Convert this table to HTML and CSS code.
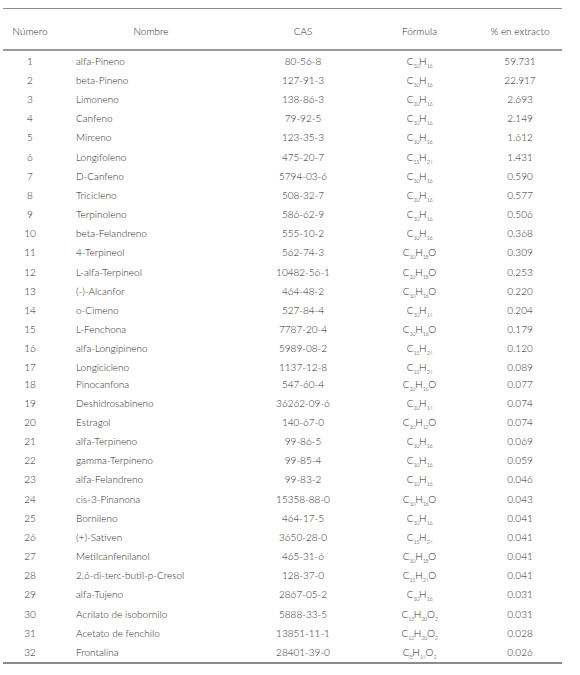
FILE: index.html
```html
<!DOCTYPE html>
<html lang="es">
<head>
<meta charset="utf-8">
<title>Composición</title>
<link rel="stylesheet" href="styles.css">
</head>
<body>
<table class="tbl">
<colgroup><col class="c1"><col class="c2"><col class="c3"><col class="c4"><col class="c5"></colgroup>
<thead>
<tr><th>Número</th><th>Nombre</th><th>CAS</th><th>Fórmula</th><th>% en extracto</th></tr>
</thead>
<tbody>
<tr><td>1</td><td class="name">alfa-Pineno</td><td>80-56-8</td><td>C<sub>10</sub>H<sub>16</sub></td><td>59.731</td></tr>
<tr><td>2</td><td class="name">beta-Pineno</td><td>127-91-3</td><td>C<sub>10</sub>H<sub>16</sub></td><td>22.917</td></tr>
<tr><td>3</td><td class="name">Limoneno</td><td>138-86-3</td><td>C<sub>10</sub>H<sub>16</sub></td><td>2.693</td></tr>
<tr><td>4</td><td class="name">Canfeno</td><td>79-92-5</td><td>C<sub>10</sub>H<sub>16</sub></td><td>2.149</td></tr>
<tr><td>5</td><td class="name">Mirceno</td><td>123-35-3</td><td>C<sub>10</sub>H<sub>16</sub></td><td>1.612</td></tr>
<tr><td>6</td><td class="name">Longifoleno</td><td>475-20-7</td><td>C<sub>15</sub>H<sub>24</sub></td><td>1.431</td></tr>
<tr><td>7</td><td class="name">D-Canfeno</td><td>5794-03-6</td><td>C<sub>10</sub>H<sub>16</sub></td><td>0.590</td></tr>
<tr><td>8</td><td class="name">Tricicleno</td><td>508-32-7</td><td>C<sub>10</sub>H<sub>16</sub></td><td>0.577</td></tr>
<tr><td>9</td><td class="name">Terpinoleno</td><td>586-62-9</td><td>C<sub>10</sub>H<sub>16</sub></td><td>0.506</td></tr>
<tr><td>10</td><td class="name">beta-Felandreno</td><td>555-10-2</td><td>C<sub>10</sub>H<sub>16</sub></td><td>0.368</td></tr>
<tr><td>11</td><td class="name">4-Terpineol</td><td>562-74-3</td><td>C<sub>10</sub>H<sub>18</sub>O</td><td>0.309</td></tr>
<tr><td>12</td><td class="name">L-alfa-Terpineol</td><td>10482-56-1</td><td>C<sub>10</sub>H<sub>18</sub>O</td><td>0.253</td></tr>
<tr><td>13</td><td class="name">(-)-Alcanfor</td><td>464-48-2</td><td>C<sub>10</sub>H<sub>16</sub>O</td><td>0.220</td></tr>
<tr><td>14</td><td class="name">o-Cimeno</td><td>527-84-4</td><td>C<sub>10</sub>H<sub>14</sub></td><td>0.204</td></tr>
<tr><td>15</td><td class="name">L-Fenchona</td><td>7787-20-4</td><td>C<sub>10</sub>H<sub>16</sub>O</td><td>0.179</td></tr>
<tr><td>16</td><td class="name">alfa-Longipineno</td><td>5989-08-2</td><td>C<sub>15</sub>H<sub>24</sub></td><td>0.120</td></tr>
<tr class="tight"><td>17</td><td class="name">Longicicleno</td><td>1137-12-8</td><td>C<sub>15</sub>H<sub>24</sub></td><td>0.089</td></tr>
<tr class="tight"><td>18</td><td class="name">Pinocanfona</td><td>547-60-4</td><td>C<sub>10</sub>H<sub>16</sub>O</td><td>0.077</td></tr>
<tr><td>19</td><td class="name">Deshidrosabineno</td><td>36262-09-6</td><td>C<sub>10</sub>H<sub>14</sub></td><td>0.074</td></tr>
<tr><td>20</td><td class="name">Estragol</td><td>140-67-0</td><td>C<sub>10</sub>H<sub>12</sub>O</td><td>0.074</td></tr>
<tr><td>21</td><td class="name">alfa-Terpineno</td><td>99-86-5</td><td>C<sub>10</sub>H<sub>16</sub></td><td>0.069</td></tr>
<tr><td>22</td><td class="name">gamma-Terpineno</td><td>99-85-4</td><td>C<sub>10</sub>H<sub>16</sub></td><td>0.059</td></tr>
<tr><td>23</td><td class="name">alfa-Felandreno</td><td>99-83-2</td><td>C<sub>10</sub>H<sub>16</sub></td><td>0.046</td></tr>
<tr><td>24</td><td class="name">cis-3-Pinanona</td><td>15358-88-0</td><td>C<sub>10</sub>H<sub>16</sub>O</td><td>0.043</td></tr>
<tr><td>25</td><td class="name">Bornileno</td><td>464-17-5</td><td>C<sub>10</sub>H<sub>16</sub></td><td>0.041</td></tr>
<tr><td>26</td><td class="name">(+)-Sativen</td><td>3650-28-0</td><td>C<sub>15</sub>H<sub>24</sub></td><td>0.041</td></tr>
<tr><td>27</td><td class="name">Metilcanfenilanol</td><td>465-31-6</td><td>C<sub>10</sub>H<sub>18</sub>O</td><td>0.041</td></tr>
<tr><td>28</td><td class="name">2,6-di-terc-butil-p-Cresol</td><td>128-37-0</td><td>C<sub>15</sub>H<sub>24</sub>O</td><td>0.041</td></tr>
<tr><td>29</td><td class="name">alfa-Tujeno</td><td>2867-05-2</td><td>C<sub>10</sub>H<sub>16</sub></td><td>0.031</td></tr>
<tr><td>30</td><td class="name">Acrilato de isobornilo</td><td>5888-33-5</td><td>C<sub>13</sub>H<sub>20</sub>O<sub>2</sub></td><td>0.031</td></tr>
<tr><td>31</td><td class="name">Acetato de fenchilo</td><td>13851-11-1</td><td>C<sub>12</sub>H<sub>20</sub>O<sub>2</sub></td><td>0.028</td></tr>
<tr><td>32</td><td class="name">Frontalina</td><td>28401-39-0</td><td>C<sub>8</sub>H<sub>14</sub>O<sub>2</sub></td><td>0.026</td></tr>
</tbody>
</table>
</body>
</html>
```
FILE: styles.css
```css
html, body {
  margin: 0;
  padding: 0;
  background: #ffffff;
}
body {
  padding: 8px 0 0 3px;
  font-family: Lato, "Liberation Sans", sans-serif;
  font-weight: 300;
  font-size: 10px;
  color: #2b2b2b;
}
.tbl {
  width: 559px;
  border-collapse: collapse;
  table-layout: fixed;
  border-top: 1px solid #8c8c8c;
  border-bottom: 2px solid #8c8c8c;
}
.c1 { width: 54px; }
.c2 { width: 188px; }
.c3 { width: 116px; }
.c4 { width: 117px; }
.c5 { width: 84px; }
.tbl th {
  font-weight: 300;
  text-align: center;
  height: 37px;
  padding: 3px 0 0 0;
  vertical-align: middle;
  border-bottom: 2px solid #9a9a9a;
}
.tbl td {
  text-align: center;
  height: 19.2px;
  padding: 0;
  vertical-align: middle;
  white-space: nowrap;
  line-height: 12px;
}
.tbl tr.tight td { height: 17.5px; }
.tbl td.name {
  text-align: left;
  padding-left: 19px;
}
.tbl sub {
  font-size: 5.5px;
  letter-spacing: -0.4px;
  vertical-align: -3px;
  line-height: 0;
}
```
